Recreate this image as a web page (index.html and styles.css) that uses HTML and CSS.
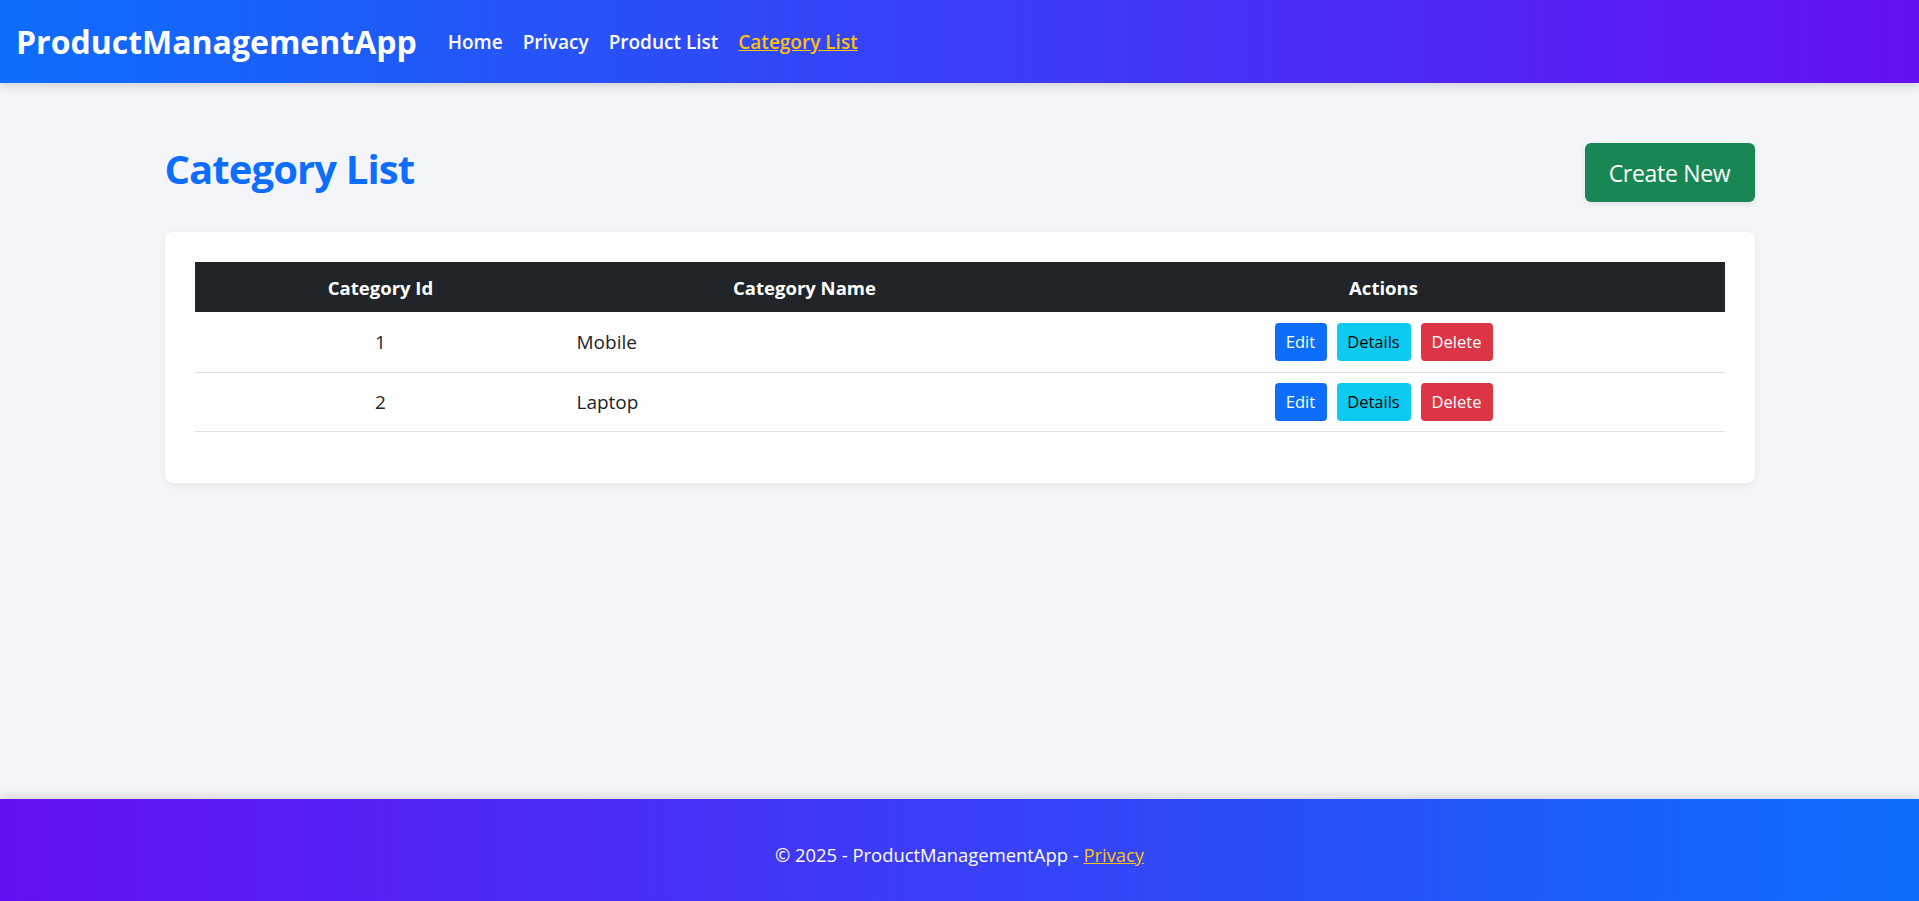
FILE: index.html
```html
<!DOCTYPE html>
<html lang="en">
<head>
<meta charset="utf-8">
<title>Category List - ProductManagementApp</title>
<link rel="stylesheet" href="styles.css">
</head>
<body>
<header class="navbar">
  <a class="brand" href="#">ProductManagementApp</a>
  <nav class="nav-links">
    <a href="#">Home</a>
    <a href="#">Privacy</a>
    <a href="#">Product List</a>
    <a href="#" class="active">Category List</a>
  </nav>
</header>
<main class="container">
  <div class="page-head">
    <h1 class="page-title">Category List</h1>
    <a href="#" class="btn-create">Create New</a>
  </div>
  <section class="card">
    <table class="table">
      <colgroup>
        <col class="c-id"><col class="c-name"><col class="c-act">
      </colgroup>
      <thead>
        <tr><th>Category Id</th><th>Category Name</th><th>Actions</th></tr>
      </thead>
      <tbody>
        <tr>
          <td class="center">1</td>
          <td>Mobile</td>
          <td class="center"><div class="actions"><a class="btn btn-edit" href="#">Edit</a><a class="btn btn-details" href="#">Details</a><a class="btn btn-delete" href="#">Delete</a></div></td>
        </tr>
        <tr>
          <td class="center">2</td>
          <td>Laptop</td>
          <td class="center"><div class="actions"><a class="btn btn-edit" href="#">Edit</a><a class="btn btn-details" href="#">Details</a><a class="btn btn-delete" href="#">Delete</a></div></td>
        </tr>
      </tbody>
    </table>
  </section>
</main>
<footer class="footer">
  <span>&copy; 2025 - ProductManagementApp - <a href="#">Privacy</a></span>
</footer>
</body>
</html>
```
FILE: styles.css
```css
* { box-sizing: border-box; }
html, body { height: 100%; }
body {
  margin: 0;
  font-family: "Open Sans", "Noto Sans", sans-serif;
  background: #f4f5f9;
  color: #212529;
  display: flex;
  flex-direction: column;
  min-height: 100vh;
}
a { text-decoration: none; }

.navbar {
  height: 83px;
  flex: 0 0 83px;
  display: flex;
  align-items: center;
  padding: 0 16px;
  background: linear-gradient(90deg, #0d6efd, #6610f2);
  box-shadow: 0 3px 10px rgba(0,0,0,0.15);
  position: relative;
  z-index: 2;
}
.brand {
  color: #fff;
  font-weight: 700;
  font-size: 32px;
  margin-right: 31px;
}
.nav-links { display: flex; gap: 20px; }
.nav-links a {
  color: #fff;
  font-weight: 600;
  font-size: 19px;
}
.nav-links a.active { color: #ffc107; text-decoration: underline; }

.container {
  flex: 1;
  width: 100%;
  max-width: 1590px;
  margin: 0 auto;
  padding-top: 60px;
}
.page-head {
  display: flex;
  justify-content: space-between;
  align-items: center;
  height: 59px;
  margin-bottom: 30px;
}
.page-title {
  margin: 0;
  color: #0d6efd;
  font-weight: 700;
  font-size: 40px;
  letter-spacing: -0.9px;
  position: relative;
  top: -4px;
}
.btn-create {
  display: flex;
  align-items: center;
  justify-content: center;
  width: 170px;
  height: 59px;
  background: #198754;
  color: #fff;
  font-size: 23px;
  letter-spacing: -0.3px;
  border-radius: 6px;
  box-shadow: 0 2px 6px rgba(0,0,0,0.08);
}

.card {
  background: #fff;
  border-radius: 8px;
  box-shadow: 0 2px 8px rgba(0,0,0,0.06);
  padding: 30px 30px 51px;
}
.table {
  width: 100%;
  border-collapse: collapse;
  table-layout: fixed;
  font-size: 19px;
}
.c-id { width: 372px; }
.c-name { width: 476px; }
.table thead th {
  background: #212529;
  color: #fff;
  font-weight: 700;
  font-size: 18.5px;
  height: 50px;
  text-align: center;
  padding: 0 10px;
}
.table tbody td {
  height: 59px;
  border-bottom: 1px solid #dee2e6;
  padding: 0 10px;
}
.table tbody tr:first-child td { height: 60px; }
.center { text-align: center; }
.actions {
  display: inline-flex;
  gap: 10px;
  vertical-align: middle;
}
.btn {
  display: inline-flex;
  align-items: center;
  justify-content: center;
  height: 38px;
  padding: 0;
  border-radius: 4px;
  font-size: 16.5px;
}
.btn-edit { background: #0d6efd; color: #fff; width: 52px; }
.btn-details { background: #0dcaf0; color: #000; width: 74px; }
.btn-delete { background: #dc3545; color: #fff; width: 72px; }

.footer {
  flex: 0 0 102px;
  height: 102px;
  display: flex;
  align-items: center;
  justify-content: center;
  background: linear-gradient(90deg, #6610f2, #0d6efd);
  color: #fff;
  font-size: 18.4px;
  box-shadow: 0 -3px 10px rgba(0,0,0,0.12);
  padding-top: 8px;
}
.footer a { color: #ffc107; text-decoration: underline; }
```
